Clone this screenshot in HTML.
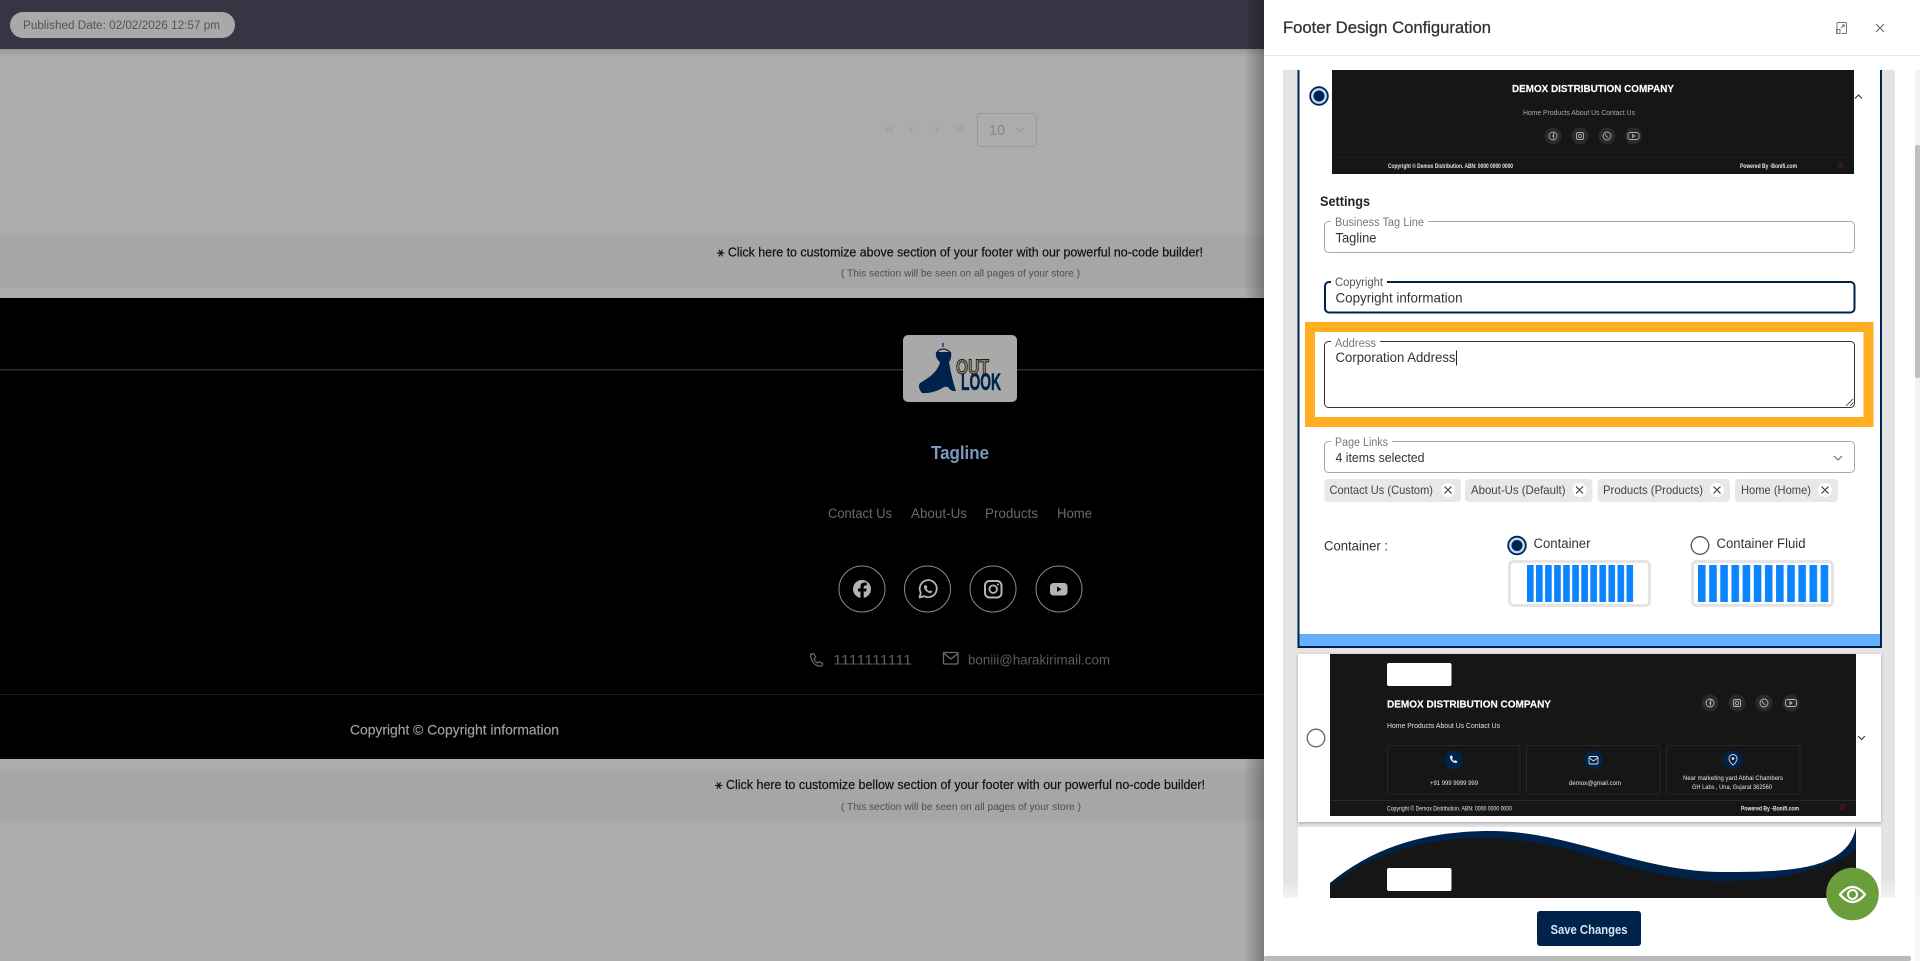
<!DOCTYPE html>
<html lang="en">
<head>
<meta charset="utf-8">
<title>Footer Design Configuration</title>
<style>
html,body{margin:0;padding:0;width:1920px;height:961px;overflow:hidden;background:#acacac}
svg{display:block;position:absolute;left:0;top:0}
text{font-family:"Liberation Sans",sans-serif;white-space:pre}
</style>
</head>
<body>
<svg width="1920" height="961" viewBox="0 0 1920 961" xmlns="http://www.w3.org/2000/svg">
<defs>
<linearGradient id="ps" x1="0" x2="1" y1="0" y2="0"><stop offset="0" stop-color="#000" stop-opacity="0"/><stop offset="1" stop-color="#000" stop-opacity=".28"/></linearGradient>
<linearGradient id="fs" x1="0" x2="0" y1="0" y2="1"><stop offset="0" stop-color="#fff" stop-opacity="0"/><stop offset="1" stop-color="#fff" stop-opacity=".6"/></linearGradient>
<linearGradient id="hs" x1="0" x2="0" y1="0" y2="1"><stop offset="0" stop-color="#000" stop-opacity=".12"/><stop offset="1" stop-color="#000" stop-opacity="0"/></linearGradient>
<pattern id="b1" patternUnits="userSpaceOnUse" x="1527" y="0" width="9.05" height="10"><rect width="6.6" height="10" fill="#0a84ff"/></pattern>
<pattern id="b2" patternUnits="userSpaceOnUse" x="1698" y="0" width="11.15" height="10"><rect width="7.6" height="10" fill="#0a84ff"/></pattern>
<filter id="sh" x="-5%" y="-5%" width="110%" height="110%"><feDropShadow dx="0" dy="1" stdDeviation="1.5" flood-color="#000" flood-opacity=".3"/></filter>
</defs>

<!-- page -->
<rect width="1920" height="961" fill="#acacac"/>
<rect y="0" width="1264" height="49" fill="#363544"/>
<rect y="49" width="1264" height="8" fill="url(#hs)"/>
<rect x="10" y="12" width="225" height="26" rx="13" fill="#a9a9a9"/>
<text x="23" y="29" font-size="11.5" fill="#555" textLength="197" lengthAdjust="spacingAndGlyphs">Published Date: 02/02/2026 12:57 pm</text>

<!-- pagination -->
<g fill="none" stroke="#9a9a9a" stroke-width="1.100">
<path d="M889 126l-3 3 3 3M893 126l-3 3 3 3M913 126l-3 3 3 3M935 126l3 3-3 3M956 126l3 3-3 3M960 126l3 3-3 3"/>
<rect x="977.5" y="113.5" width="59" height="33" rx="3" stroke="#999"/>
<path d="M1016 128l4 4 4-4"/>
</g>
<text x="989" y="135" font-size="15" fill="#878787" textLength="16" lengthAdjust="spacingAndGlyphs">10</text>

<!-- band 1 -->
<rect y="235" width="1264" height="53" fill="#a6a6a6"/>
<text x="717" y="256.500" font-size="13" fill="#111" stroke="#111" stroke-width=".2" textLength="486" lengthAdjust="spacingAndGlyphs">⚹ Click here to customize above section of your footer with our powerful no-code builder!</text>
<text x="841" y="276.500" font-size="10.500" fill="#4d4d4d" textLength="239" lengthAdjust="spacingAndGlyphs">( This section will be seen on all pages of your store )</text>

<!-- black footer -->
<rect y="298" width="1264" height="461" fill="#000"/>
<rect y="369" width="1264" height="1.500" fill="#2c2c2c"/>
<rect x="903" y="335" width="114" height="67" rx="5" fill="#a9a9a9"/>
<path d="M943 343v4M937 352q6-6 13 0" fill="none" stroke="#00234b" stroke-width="1.200"/>
<path d="M936 352L951 352Q952 358 949 362Q951 376 956 391Q951 392 948 387Q944 386 941 389Q930 394 922 393Q917 387 920 383Q938 373 940 362Q935 358 936 352Z" fill="#00234b"/>
<text x="961" y="390" font-size="24" font-weight="700" fill="#00234b" stroke="#00234b" stroke-width=".5" textLength="40" lengthAdjust="spacingAndGlyphs">LOOK</text>
<text x="956" y="374" font-size="21" font-weight="700" fill="#8a7a68" stroke="#1a1a1a" stroke-width=".9" textLength="33" lengthAdjust="spacingAndGlyphs">OUT</text>

<text x="931" y="459" font-size="18" font-weight="700" fill="#7b99bc" textLength="58" lengthAdjust="spacingAndGlyphs">Tagline</text>
<g font-size="14" fill="#6a6a6a">
<text x="828" y="518" textLength="64" lengthAdjust="spacingAndGlyphs">Contact Us</text>
<text x="911" y="518" textLength="56" lengthAdjust="spacingAndGlyphs">About-Us</text>
<text x="985" y="518" textLength="53" lengthAdjust="spacingAndGlyphs">Products</text>
<text x="1057" y="518" textLength="35" lengthAdjust="spacingAndGlyphs">Home</text>
</g>

<g fill="none" stroke="#8a8a8a" stroke-width="1">
<circle cx="862" cy="589" r="23"/><circle cx="927.500" cy="589" r="23"/><circle cx="993" cy="589" r="23"/><circle cx="1059" cy="589" r="23"/>
</g>
<circle cx="862" cy="589" r="9" fill="#b4b4b4"/>
<path d="M860.500 598.500v-7h-2.500v-3h2.500v-2q0-4 4-4h2.200v3h-1.500q-1.500 0-1.500 1.500v1.500h3l-.5 3h-2.500v7z" fill="#000"/>
<path d="M919.500 597.500l1.300-4.700a8.500 8.500 0 1 1 3.300 3.300z" fill="none" stroke="#b4b4b4" stroke-width="1.800" stroke-linejoin="round"/>
<path d="M924.500 585.500q-1.200 1.500 0 3.500 2 3 5 4 2 .3 3-1.200l-2-1.500-1 1q-2-.8-3-3l1-1-1.300-2.300z" fill="#b4b4b4"/>
<rect x="985" y="581" width="16.500" height="16.500" rx="4.500" fill="none" stroke="#b4b4b4" stroke-width="2"/>
<circle cx="993.200" cy="589.200" r="3.800" fill="none" stroke="#b4b4b4" stroke-width="1.800"/>
<circle cx="998" cy="584.500" r="1" fill="#b4b4b4"/>
<rect x="1050" y="583" width="17.500" height="12.500" rx="3.500" fill="#b4b4b4"/>
<path d="M1057 586.500v5.500l4.500-2.700z" fill="#000"/>

<path d="M811 654.500l2.800-1 2 4-1.800 1.500q1 2.500 3.500 4l1.700-1.500 3.500 2.200-1 2.300q-3 .8-6.500-1.500-5-4-4.700-10.500z" fill="none" stroke="#6d737a" stroke-width="1.100" stroke-linejoin="round"/>
<text x="833" y="664.500" font-size="14" fill="#566068" textLength="79" lengthAdjust="spacingAndGlyphs">1111111111</text>
<rect x="943.500" y="652.500" width="14.500" height="11.500" rx="1" fill="none" stroke="#6d6d6d" stroke-width="1.300"/>
<path d="M944 653.500l7 5.500 7-5.500" fill="none" stroke="#6d6d6d" stroke-width="1.300"/>
<text x="968" y="664.500" font-size="13.500" fill="#565d66" textLength="142" lengthAdjust="spacingAndGlyphs">boniii@harakirimail.com</text>

<rect y="694" width="1264" height="1" fill="#1d1d1d"/>
<text x="350" y="734.500" font-size="14" fill="#a2a2a2" stroke="#a2a2a2" stroke-width=".15" textLength="209" lengthAdjust="spacingAndGlyphs">Copyright © Copyright information</text>

<!-- band 2 -->
<rect y="769" width="1264" height="51" fill="#a6a6a6"/>
<text x="715" y="789" font-size="13" fill="#111" stroke="#111" stroke-width=".2" textLength="490" lengthAdjust="spacingAndGlyphs">⚹ Click here to customize bellow section of your footer with our powerful no-code builder!</text>
<text x="841" y="810" font-size="10.500" fill="#4d4d4d" textLength="240" lengthAdjust="spacingAndGlyphs">( This section will be seen on all pages of your store )</text>

<rect x="1244" y="0" width="20" height="961" fill="url(#ps)"/>

<!-- panel -->
<rect x="1264" y="0" width="656" height="961" fill="#fff"/>
<rect x="1264" y="55" width="656" height="1" fill="#e6e6e6"/>
<text x="1283" y="33" font-size="17" fill="#333" stroke="#333" stroke-width=".3" textLength="208" lengthAdjust="spacingAndGlyphs">Footer Design Configuration</text>
<g fill="none" stroke="#777" stroke-width="1">
<path d="M1837 33.500v-10q0-1 1-1h7.500q1 0 1 1v9q0 1-1 1h-4"/><rect x="1836.500" y="29.500" width="3.500" height="4"/><path d="M1841 28l3-3M1842 25h2.300v2.300"/>
<path d="M1876 24l8 8M1884 24l-8 8" stroke="#666" stroke-width="1.100"/>
</g>

<!-- scroll track -->
<rect x="1915" y="70" width="5" height="891" fill="#f3f3f3"/>
<rect x="1915" y="145" width="5" height="233" rx="2" fill="#c1c1c1"/>

<!-- list bg -->
<rect x="1283" y="70" width="612" height="828" fill="#e4e4e4"/>

<!-- card 1 -->
<rect x="1298.500" y="60" width="582.500" height="587" fill="#fff" stroke="#00234b" stroke-width="2"/>
<rect x="1264" y="56" width="656" height="14" fill="#fff"/>
<rect x="1299.500" y="634" width="580.500" height="12" fill="#64aefb"/>

<rect x="1332" y="70" width="522" height="104" fill="#161616"/>
<rect x="1332" y="157" width="522" height="1" fill="#1e1e1e"/>
<text x="1512" y="92" font-size="10.500" font-weight="700" fill="#fff" stroke="#fff" stroke-width=".15" textLength="162" lengthAdjust="spacingAndGlyphs">DEMOX DISTRIBUTION COMPANY</text>
<text x="1523" y="115" font-size="7.500" fill="#a9a9a9" textLength="112" lengthAdjust="spacingAndGlyphs">Home Products About Us Contact Us</text>
<g fill="#2a2a2a"><circle cx="1553" cy="136" r="8.500"/><circle cx="1580" cy="136" r="8.500"/><circle cx="1607" cy="136" r="8.500"/><circle cx="1633.500" cy="136" r="8.500"/></g>
<g fill="none" stroke="#aaa" stroke-width=".9">
<circle cx="1553" cy="136" r="4"/><path d="M1553.500 139v-5q0-1 1-1M1552 136h2.500"/>
<rect x="1576.500" y="132.500" width="7" height="7" rx="1.500"/><circle cx="1580" cy="136" r="1.700"/>
<circle cx="1607" cy="136" r="4"/><path d="M1605.500 134q0 3 3 3.500"/>
<rect x="1628" y="132.500" width="11" height="7" rx="2.200"/><path d="M1632.500 134.500v3l2-1.500z"/>
</g>
<text x="1388" y="168" font-size="6" font-weight="700" fill="#e4e4e4" textLength="125" lengthAdjust="spacingAndGlyphs">Copyright © Demox Distribution. ABN: 0000 0000 0000</text>
<text x="1740" y="168" font-size="6" font-weight="700" fill="#e4e4e4" textLength="57" lengthAdjust="spacingAndGlyphs">Powered By -Bonifi.com</text>
<path d="M1838 162l5 6M1843 162l-5 6" stroke="#4a1a12" stroke-width="1.400"/>

<circle cx="1319" cy="96" r="8.800" fill="#bcdcff" stroke="#00234b" stroke-width="1.800"/>
<circle cx="1319" cy="96" r="5.500" fill="#00234b"/>
<path d="M1855 98.500l3.500-3.500 3.500 3.500" fill="none" stroke="#333" stroke-width="1.100"/>

<text x="1320" y="206" font-size="14" font-weight="700" fill="#222" textLength="50" lengthAdjust="spacingAndGlyphs">Settings</text>

<!-- input 1 -->
<rect x="1324.500" y="221.500" width="530" height="31" rx="4" fill="#fff" stroke="#a8a8a8"/>
<rect x="1331" y="219" width="97" height="5" fill="#fff"/>
<text x="1335" y="226" font-size="11.500" fill="#777" textLength="89" lengthAdjust="spacingAndGlyphs">Business Tag Line</text>
<text x="1335.500" y="242.500" font-size="14" fill="#333" textLength="41" lengthAdjust="spacingAndGlyphs">Tagline</text>

<!-- input 2 -->
<rect x="1325" y="282" width="529.500" height="30.500" rx="4" fill="#fff" stroke="#00234b" stroke-width="2"/>
<rect x="1331" y="279" width="56" height="6" fill="#fff"/>
<text x="1335" y="286" font-size="11.500" fill="#555" textLength="48" lengthAdjust="spacingAndGlyphs">Copyright</text>
<text x="1335.500" y="302.500" font-size="14" fill="#333" textLength="127" lengthAdjust="spacingAndGlyphs">Copyright information</text>

<!-- highlighted address -->
<rect x="1305" y="322" width="568.500" height="105" fill="#ffae21"/>
<rect x="1315" y="332" width="548.500" height="85" fill="#fff"/>
<rect x="1324.500" y="341.500" width="530" height="66" rx="4" fill="#fff" stroke="#333"/>
<rect x="1331" y="339" width="49" height="5" fill="#fff"/>
<text x="1335" y="347" font-size="11.500" fill="#777" textLength="41" lengthAdjust="spacingAndGlyphs">Address</text>
<text x="1335.500" y="362" font-size="14" fill="#333" textLength="120" lengthAdjust="spacingAndGlyphs">Corporation Address</text>
<rect x="1456" y="350.500" width="1" height="15" fill="#222"/>
<path d="M1846 406l7-7M1850 406l3.500-3.500" stroke="#555" stroke-width=".9"/>

<!-- page links -->
<rect x="1324.500" y="441.500" width="530" height="31" rx="4" fill="#fff" stroke="#a8a8a8"/>
<rect x="1331" y="439" width="61" height="5" fill="#fff"/>
<text x="1335" y="446" font-size="11.500" fill="#777" textLength="53" lengthAdjust="spacingAndGlyphs">Page Links</text>
<text x="1335.500" y="462" font-size="12.500" fill="#333" textLength="89" lengthAdjust="spacingAndGlyphs">4 items selected</text>
<path d="M1834 456l4 4 4-4" fill="none" stroke="#666" stroke-width="1.100"/>

<g fill="#e8e8e8">
<rect x="1324.500" y="479" width="136.500" height="23" rx="4"/>
<rect x="1465" y="479" width="127.500" height="23" rx="4"/>
<rect x="1597.500" y="479" width="132.500" height="23" rx="4"/>
<rect x="1735" y="479" width="103" height="23" rx="4"/>
</g>
<g font-size="12" fill="#444">
<text x="1329.500" y="494" textLength="103.500" lengthAdjust="spacingAndGlyphs">Contact Us (Custom)</text>
<text x="1471" y="494" textLength="94.500" lengthAdjust="spacingAndGlyphs">About-Us (Default)</text>
<text x="1603" y="494" textLength="100" lengthAdjust="spacingAndGlyphs">Products (Products)</text>
<text x="1741" y="494" textLength="70" lengthAdjust="spacingAndGlyphs">Home (Home)</text>
</g>
<g fill="#fff"><circle cx="1448" cy="490" r="7"/><circle cx="1579.500" cy="490" r="7"/><circle cx="1717" cy="490" r="7"/><circle cx="1825" cy="490" r="7"/></g>
<g fill="none" stroke="#333" stroke-width="1.100">
<path d="M1444.500 486.500l7 7M1451.500 486.500l-7 7M1576 486.500l7 7M1583 486.500l-7 7M1713.500 486.500l7 7M1720.500 486.500l-7 7M1821.500 486.500l7 7M1828.500 486.500l-7 7"/>
</g>

<!-- container -->
<text x="1324" y="550.500" font-size="14" fill="#333" textLength="64" lengthAdjust="spacingAndGlyphs">Container :</text>
<circle cx="1517" cy="545.500" r="8.800" fill="#bcdcff" stroke="#00234b" stroke-width="1.800"/>
<circle cx="1517" cy="545.500" r="5.500" fill="#00234b"/>
<text x="1533.500" y="548" font-size="13.500" fill="#333" textLength="57" lengthAdjust="spacingAndGlyphs">Container</text>
<circle cx="1700" cy="545.500" r="8.800" fill="#fff" stroke="#555" stroke-width="1.300"/>
<text x="1716.500" y="548" font-size="13.500" fill="#333" textLength="89" lengthAdjust="spacingAndGlyphs">Container Fluid</text>
<rect x="1509.500" y="561.500" width="140" height="44" rx="4" fill="#fff" stroke="#e4e4e4" stroke-width="3"/>
<rect x="1527" y="565" width="106.300" height="37" fill="url(#b1)"/>
<rect x="1692.500" y="561.500" width="140" height="44" rx="4" fill="#fff" stroke="#e4e4e4" stroke-width="3"/>
<rect x="1698" y="565" width="130.500" height="37" fill="url(#b2)"/>

<!-- card 2 -->
<rect x="1298" y="654" width="583" height="168" fill="#fff" filter="url(#sh)"/>
<rect x="1330" y="654" width="526" height="162" fill="#161616"/>
<rect x="1387" y="663" width="64.500" height="23" rx="2" fill="#fff"/>
<text x="1387" y="707.500" font-size="10.500" font-weight="700" fill="#fff" stroke="#fff" stroke-width=".15" textLength="164" lengthAdjust="spacingAndGlyphs">DEMOX DISTRIBUTION COMPANY</text>
<text x="1387" y="728" font-size="7.500" fill="#e2e2e2" textLength="113" lengthAdjust="spacingAndGlyphs">Home Products About Us Contact Us</text>
<g fill="#2a2a2a"><circle cx="1710" cy="703" r="8.500"/><circle cx="1737" cy="703" r="8.500"/><circle cx="1764" cy="703" r="8.500"/><circle cx="1791" cy="703" r="8.500"/></g>
<g fill="none" stroke="#bbb" stroke-width=".9">
<circle cx="1710" cy="703" r="4"/><path d="M1710.500 706v-5q0-1 1-1M1709 703h2.500"/>
<rect x="1733.500" y="699.500" width="7" height="7" rx="1.500"/><circle cx="1737" cy="703" r="1.700"/>
<circle cx="1764" cy="703" r="4"/><path d="M1762.500 701q0 3 3 3.500"/>
<rect x="1785.500" y="699.500" width="11" height="7" rx="2.200"/><path d="M1790 701.500v3l2-1.500z"/>
</g>
<g fill="#161616" stroke="#262626">
<rect x="1387.500" y="745.500" width="132.500" height="48.500" rx="2"/>
<rect x="1526.500" y="745.500" width="133.500" height="48.500" rx="2"/>
<rect x="1666.500" y="745.500" width="133.500" height="48.500" rx="2"/>
</g>
<g fill="#00234b"><ellipse cx="1453.500" cy="760" rx="9.300" ry="9.500"/><ellipse cx="1593.500" cy="760" rx="9.300" ry="9.500"/><ellipse cx="1733" cy="760" rx="9.300" ry="9.500"/></g>
<path d="M1450 756l1.800-.6 1.200 2.400-1 1q.7 1.500 2.200 2.300l1-1 2.200 1.300-.6 1.500q-2 .5-4.200-1-3-2.500-2.600-5.900z" fill="#e8e8e8"/>
<rect x="1589" y="756.500" width="9" height="7.500" rx="1.500" fill="none" stroke="#e0e0e0" stroke-width=".9"/>
<path d="M1589.500 758l4 3 4-3" fill="none" stroke="#e0e0e0" stroke-width=".9"/>
<path d="M1733 765q-4-3.500-4-6.500a4 4 0 0 1 8 0q0 3-4 6.500z" fill="none" stroke="#e0e0e0" stroke-width=".9"/>
<circle cx="1733" cy="758.500" r="1.400" fill="#e0e0e0"/>
<text x="1430" y="785" font-size="6.500" fill="#e6e6e6" textLength="48" lengthAdjust="spacingAndGlyphs">+91 999 9999 999</text>
<text x="1569" y="785" font-size="6.500" fill="#e6e6e6" textLength="52" lengthAdjust="spacingAndGlyphs">demox@gmail.com</text>
<text x="1683" y="780" font-size="6.500" fill="#e6e6e6" textLength="100" lengthAdjust="spacingAndGlyphs">Near marketing yard Abhai Chambers</text>
<text x="1692" y="789" font-size="6.500" fill="#e6e6e6" textLength="80" lengthAdjust="spacingAndGlyphs">GH Labs , Una, Gujarat 362560</text>
<rect x="1330" y="800" width="526" height="1" fill="#2a2a2a"/>
<text x="1387" y="810.500" font-size="6" fill="#e6e6e6" textLength="125" lengthAdjust="spacingAndGlyphs">Copyright © Demox Distribution. ABN: 0000 0000 0000</text>
<text x="1741" y="810.500" font-size="6" font-weight="700" fill="#e6e6e6" textLength="58" lengthAdjust="spacingAndGlyphs">Powered By -Bonifi.com</text>
<path d="M1840 804l5 6M1845 804l-5 6" stroke="#4a1a12" stroke-width="1.400"/>
<circle cx="1316" cy="738" r="8.800" fill="#fff" stroke="#666" stroke-width="1.300"/>
<path d="M1858 736l3.500 3.500 3.500-3.500" fill="none" stroke="#333" stroke-width="1.100"/>

<!-- card 3 -->
<rect x="1298" y="827" width="583" height="75" fill="#fff"/>
<path d="M1330 883C1370 850 1420 831 1491 831C1570 831 1640 872 1723 872C1790 872 1848 870 1856 827V900H1330Z" fill="#00234b"/>
<path d="M1330 886C1370 855 1420 838 1485 838C1570 838 1640 881 1723 881C1780 881 1825 870 1856 850V900H1330Z" fill="#161616"/>
<rect x="1387" y="868" width="64.500" height="23" rx="2" fill="#fff"/>

<!-- bottom bar -->
<rect x="1264" y="880" width="66" height="18" fill="url(#fs)"/>
<rect x="1856" y="880" width="59" height="18" fill="url(#fs)"/>
<rect x="1264" y="898" width="651" height="58" fill="#fff"/>
<rect x="1915" y="898" width="5" height="63" fill="#f7f7f7"/>
<rect x="1264" y="956" width="651" height="5" fill="#fff"/>
<rect x="1264" y="956" width="647" height="5" rx="2" fill="#bababa"/>
<rect x="1537" y="911" width="104" height="35" rx="3" fill="#00234b"/>
<text x="1550.500" y="934" font-size="13" font-weight="700" fill="#d6e4f2" textLength="77" lengthAdjust="spacingAndGlyphs">Save Changes</text>

<!-- floating eye -->
<circle cx="1852.500" cy="894" r="26.300" fill="#6a9e3a"/>
<path d="M1840 894.500q12.500-15 25 0q-12.500 15-25 0z" fill="none" stroke="#fff" stroke-width="2.200" stroke-linejoin="round"/>
<circle cx="1852.500" cy="894.500" r="4.500" fill="none" stroke="#fff" stroke-width="2"/>
</svg>
</body>
</html>
